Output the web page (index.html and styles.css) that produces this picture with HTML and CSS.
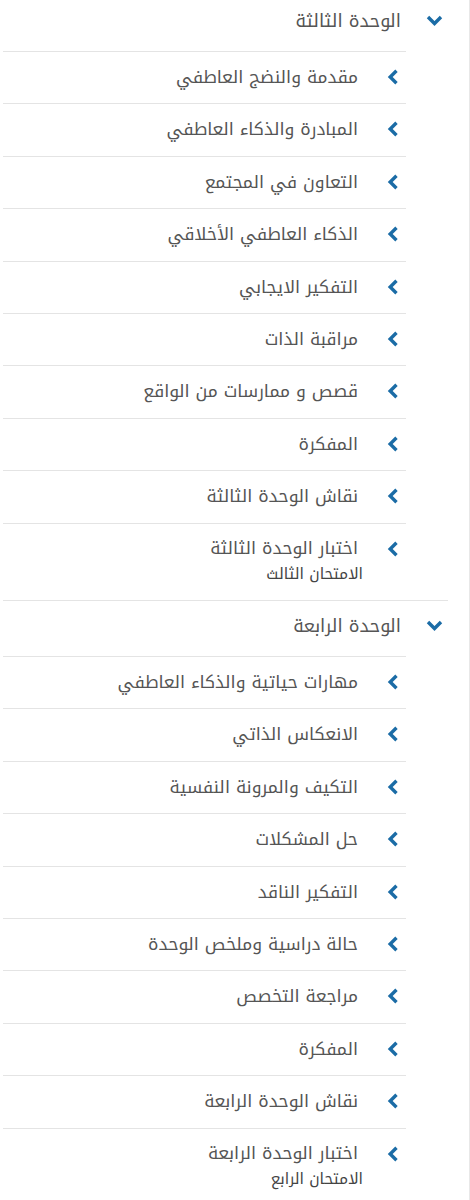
FILE: index.html
```html
<!DOCTYPE html>
<html lang="ar" dir="rtl">
<head>
<meta charset="utf-8">
<title>الوحدات</title>
<link rel="stylesheet" href="styles.css">
</head>
<body>
<div class="menu">
  <section class="unit">
    <div class="unit-head">
      <svg class="chev-down" width="17" height="11" viewBox="0 0 17 11"><path d="M2 2 L8.5 8.5 L15 2" /></svg>
      <span class="unit-title">الوحدة الثالثة</span>
    </div>
    <ul class="lessons">
      <li class="lesson"><svg class="chev" width="12" height="16" viewBox="0 0 12 16"><path d="M9.5 1.8 L3.2 8 L9.5 14.2" /></svg><span class="lesson-title">مقدمة والنضج العاطفي</span></li>
      <li class="lesson"><svg class="chev" width="12" height="16" viewBox="0 0 12 16"><path d="M9.5 1.8 L3.2 8 L9.5 14.2" /></svg><span class="lesson-title">المبادرة والذكاء العاطفي</span></li>
      <li class="lesson"><svg class="chev" width="12" height="16" viewBox="0 0 12 16"><path d="M9.5 1.8 L3.2 8 L9.5 14.2" /></svg><span class="lesson-title">التعاون في المجتمع</span></li>
      <li class="lesson"><svg class="chev" width="12" height="16" viewBox="0 0 12 16"><path d="M9.5 1.8 L3.2 8 L9.5 14.2" /></svg><span class="lesson-title">الذكاء العاطفي الأخلاقي</span></li>
      <li class="lesson"><svg class="chev" width="12" height="16" viewBox="0 0 12 16"><path d="M9.5 1.8 L3.2 8 L9.5 14.2" /></svg><span class="lesson-title">التفكير الايجابي</span></li>
      <li class="lesson"><svg class="chev" width="12" height="16" viewBox="0 0 12 16"><path d="M9.5 1.8 L3.2 8 L9.5 14.2" /></svg><span class="lesson-title">مراقبة الذات</span></li>
      <li class="lesson"><svg class="chev" width="12" height="16" viewBox="0 0 12 16"><path d="M9.5 1.8 L3.2 8 L9.5 14.2" /></svg><span class="lesson-title">قصص و ممارسات من الواقع</span></li>
      <li class="lesson"><svg class="chev" width="12" height="16" viewBox="0 0 12 16"><path d="M9.5 1.8 L3.2 8 L9.5 14.2" /></svg><span class="lesson-title">المفكرة</span></li>
      <li class="lesson"><svg class="chev" width="12" height="16" viewBox="0 0 12 16"><path d="M9.5 1.8 L3.2 8 L9.5 14.2" /></svg><span class="lesson-title">نقاش الوحدة الثالثة</span></li>
      <li class="lesson lesson-exam"><svg class="chev" width="12" height="16" viewBox="0 0 12 16"><path d="M9.5 1.8 L3.2 8 L9.5 14.2" /></svg><div class="lesson-body"><span class="lesson-title">اختبار الوحدة الثالثة</span><span class="lesson-sub">الامتحان الثالث</span></div></li>
    </ul>
  </section>
  <section class="unit">
    <div class="unit-head">
      <svg class="chev-down" width="17" height="11" viewBox="0 0 17 11"><path d="M2 2 L8.5 8.5 L15 2" /></svg>
      <span class="unit-title">الوحدة الرابعة</span>
    </div>
    <ul class="lessons">
      <li class="lesson"><svg class="chev" width="12" height="16" viewBox="0 0 12 16"><path d="M9.5 1.8 L3.2 8 L9.5 14.2" /></svg><span class="lesson-title">مهارات حياتية والذكاء العاطفي</span></li>
      <li class="lesson"><svg class="chev" width="12" height="16" viewBox="0 0 12 16"><path d="M9.5 1.8 L3.2 8 L9.5 14.2" /></svg><span class="lesson-title">الانعكاس الذاتي</span></li>
      <li class="lesson"><svg class="chev" width="12" height="16" viewBox="0 0 12 16"><path d="M9.5 1.8 L3.2 8 L9.5 14.2" /></svg><span class="lesson-title">التكيف والمرونة النفسية</span></li>
      <li class="lesson"><svg class="chev" width="12" height="16" viewBox="0 0 12 16"><path d="M9.5 1.8 L3.2 8 L9.5 14.2" /></svg><span class="lesson-title">حل المشكلات</span></li>
      <li class="lesson"><svg class="chev" width="12" height="16" viewBox="0 0 12 16"><path d="M9.5 1.8 L3.2 8 L9.5 14.2" /></svg><span class="lesson-title">التفكير الناقد</span></li>
      <li class="lesson"><svg class="chev" width="12" height="16" viewBox="0 0 12 16"><path d="M9.5 1.8 L3.2 8 L9.5 14.2" /></svg><span class="lesson-title">حالة دراسية وملخص الوحدة</span></li>
      <li class="lesson"><svg class="chev" width="12" height="16" viewBox="0 0 12 16"><path d="M9.5 1.8 L3.2 8 L9.5 14.2" /></svg><span class="lesson-title">مراجعة التخصص</span></li>
      <li class="lesson"><svg class="chev" width="12" height="16" viewBox="0 0 12 16"><path d="M9.5 1.8 L3.2 8 L9.5 14.2" /></svg><span class="lesson-title">المفكرة</span></li>
      <li class="lesson"><svg class="chev" width="12" height="16" viewBox="0 0 12 16"><path d="M9.5 1.8 L3.2 8 L9.5 14.2" /></svg><span class="lesson-title">نقاش الوحدة الرابعة</span></li>
      <li class="lesson lesson-exam"><svg class="chev" width="12" height="16" viewBox="0 0 12 16"><path d="M9.5 1.8 L3.2 8 L9.5 14.2" /></svg><div class="lesson-body"><span class="lesson-title">اختبار الوحدة الرابعة</span><span class="lesson-sub">الامتحان الرابع</span></div></li>
    </ul>
  </section>
</div>
</body>
</html>
```

FILE: styles.css
```css
html, body {
  margin: 0;
  padding: 0;
  background: #ffffff;
}

body {
  font-family: "Noto Kufi Arabic", "DejaVu Sans", "Noto Sans Arabic", sans-serif;
  color: #555555;
}

.menu {
  width: 466px;
  margin-top: -4px;
  border-right: 1px solid #e8e8e8;
  direction: rtl;
}

.unit {
  margin-right: 21px;
  border-bottom: 1px solid #e4e4e4;
}

.unit:last-child {
  border-bottom: 0;
}

.unit-head {
  display: flex;
  align-items: center;
  gap: 25px;
  height: 55px;
  padding-right: 5px;
  padding-bottom: 6px;
  box-sizing: border-box;
}

.unit-title {
  font-size: 18px;
  line-height: 28px;
  color: #555555;
}

.chev-down,
.chev {
  flex: none;
  fill: none;
  stroke: #1b6ca6;
  stroke-width: 3.4;
  stroke-linecap: butt;
  stroke-linejoin: miter;
}

.lessons {
  list-style: none;
  margin: 0 42px 0 0;
  padding: 0;
}

.lesson {
  display: flex;
  align-items: flex-start;
  gap: 29px;
  border-top: 1px solid #e4e4e4;
  padding: 14px 7px 14px 0;
}

.lesson .chev {
  margin-top: 3px;
}

.lesson-title {
  font-size: 17.5px;
  line-height: 23.4px;
  color: #555555;
}

.lesson-exam {
  padding-top: 12px;
  padding-bottom: 14.4px;
}

.lesson-exam .chev {
  margin-top: 5px;
}

.lesson-body {
  display: flex;
  flex-direction: column;
}

.lesson-exam .lesson-title {
  line-height: 26px;
}

.lesson-sub {
  font-size: 15.4px;
  line-height: 24px;
  color: #444444;
  margin-right: -5px;
}
```
